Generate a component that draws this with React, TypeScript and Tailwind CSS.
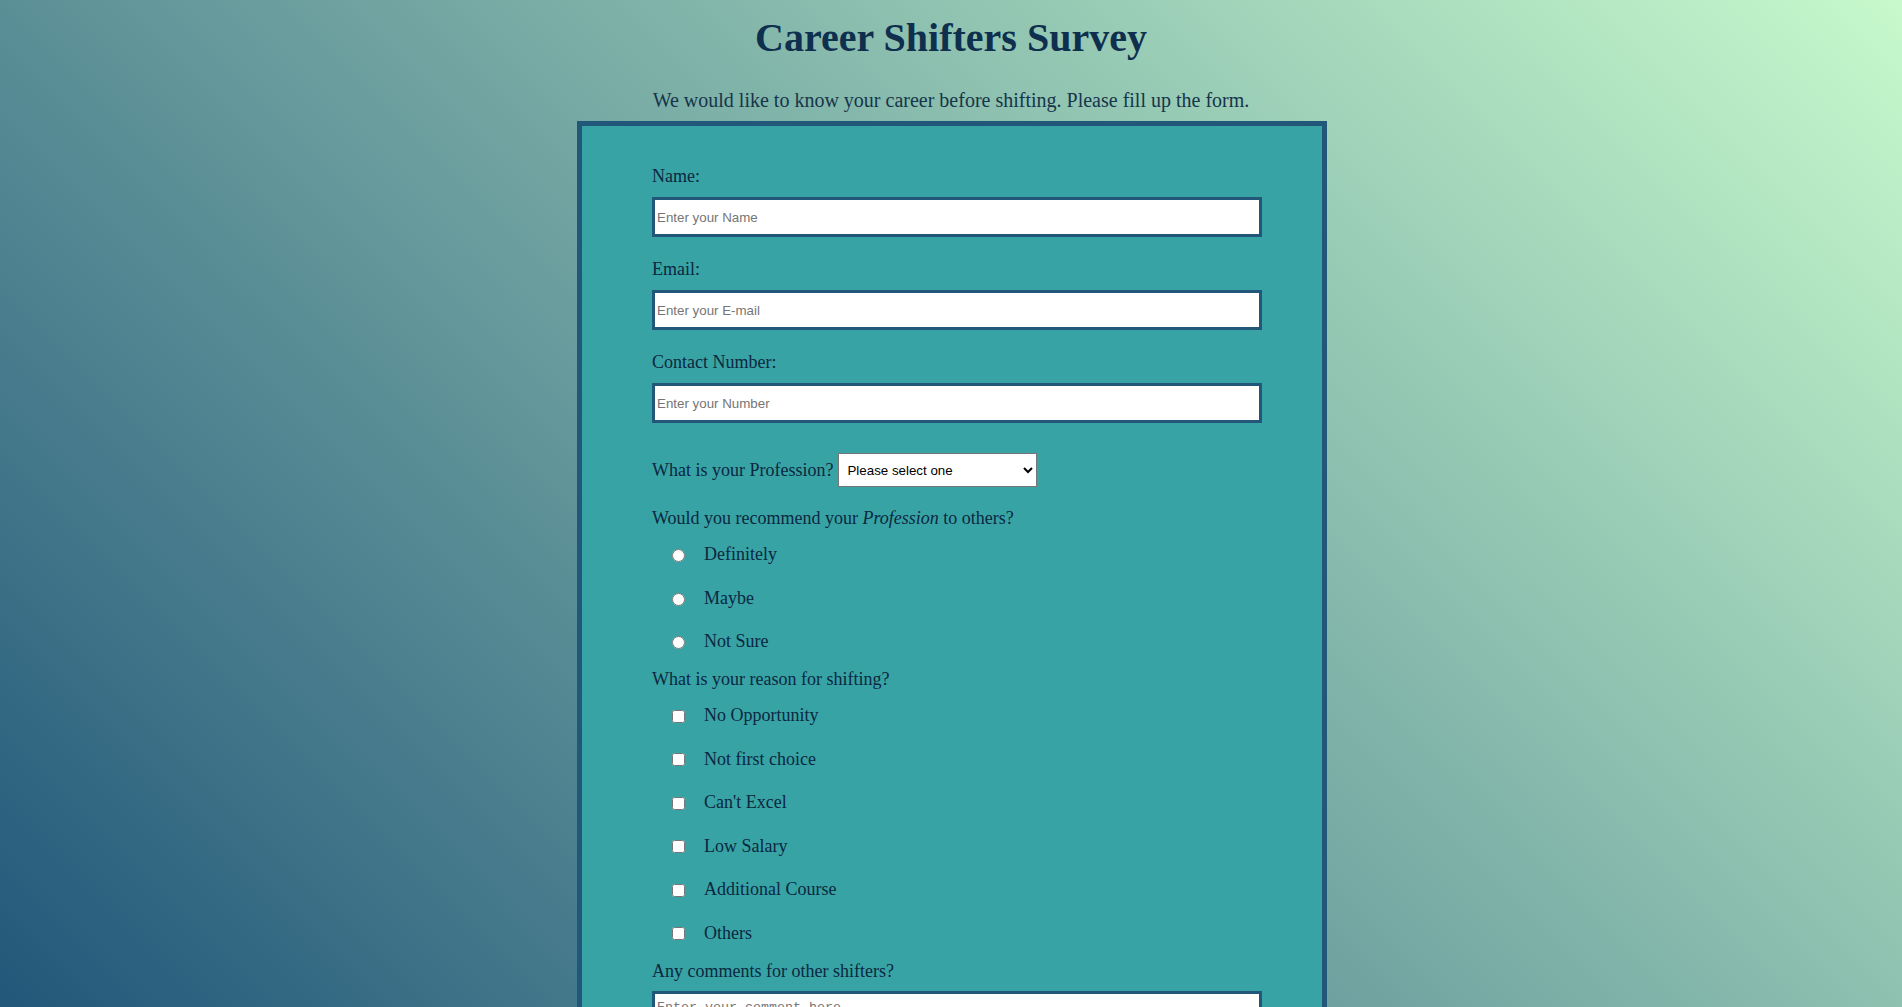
import React from "react";

const radios = ["Definitely", "Maybe", "Not Sure"];
const checks = [
  "No Opportunity",
  "Not first choice",
  "Can't Excel",
  "Low Salary",
  "Additional Course",
  "Others",
];

export default function App() {
  return (
    <div className="min-h-screen bg-[linear-gradient(45deg,#22577a,#c7f9cc)] bg-fixed font-['Liberation_Serif','Times_New_Roman',serif] pt-[15px] pb-[40px]">
      <h1 className="text-center text-[40px] leading-[46px] font-bold text-[#0e2f4d]">
        Career Shifters Survey
      </h1>
      <p className="mt-[27px] text-center text-[20px] leading-[24px] text-[#15354a]">
        We would like to know your career before shifting. Please fill up the form.
      </p>
      <form
        className="ml-[calc(50%-374px)] mt-[9px] w-[750px] border-[5px] border-[#22577a] bg-[#38a3a5] pl-[70px] pr-[60px] pt-[38px] pb-[40px] text-[18px] leading-[24px] text-[#0b2840]"
        onSubmit={(e) => e.preventDefault()}
      >
        <label className="block h-[24px]" htmlFor="name">Name:</label>
        <input
          id="name"
          type="text"
          placeholder="Enter your Name"
          className="mt-[9px] block h-[40px] w-[610px] border-[3px] border-[#22577a] bg-white px-[2px] py-[1px] font-['Liberation_Sans',Arial,sans-serif] text-[13.333px] text-black placeholder:text-[#757575] outline-none"
        />
        <label className="mt-[20px] block h-[24px]" htmlFor="email">Email:</label>
        <input
          id="email"
          type="email"
          placeholder="Enter your E-mail"
          className="mt-[9px] block h-[40px] w-[610px] border-[3px] border-[#22577a] bg-white px-[2px] py-[1px] font-['Liberation_Sans',Arial,sans-serif] text-[13.333px] text-black placeholder:text-[#757575] outline-none"
        />
        <label className="mt-[20px] block h-[24px]" htmlFor="number">Contact Number:</label>
        <input
          id="number"
          type="text"
          placeholder="Enter your Number"
          className="mt-[9px] block h-[40px] w-[610px] border-[3px] border-[#22577a] bg-white px-[2px] py-[1px] font-['Liberation_Sans',Arial,sans-serif] text-[13.333px] text-black placeholder:text-[#757575] outline-none"
        />

        <div className="mt-[30px] flex h-[34px] items-center">
          <label htmlFor="profession">What is your Profession?</label>
          <select
            id="profession"
            defaultValue=""
            className="ml-[5px] h-[34px] w-[199px] border border-[#767676] bg-white pl-[4px] font-['Liberation_Sans',Arial,sans-serif] text-[13.333px] text-black"
          >
            <option value="">Please select one</option>
            <option value="student">Student</option>
            <option value="employee">Employee</option>
            <option value="other">Other</option>
          </select>
        </div>

        <p className="mt-[19px] h-[24px]">
          Would you recommend your <i>Profession</i> to others?
        </p>
        <div className="mt-[4px]">
          {radios.map((r) => (
            <label key={r} className="flex h-[43.5px] items-center pl-[20px]">
              <input type="radio" name="recommend" className="m-0 h-[13px] w-[13px]" />
              <span className="ml-[19px] pb-[3px]">{r}</span>
            </label>
          ))}
        </div>

        <p className="mt-[2.5px] h-[24px]">What is your reason for shifting?</p>
        <div className="mt-[3.5px]">
          {checks.map((c) => (
            <label key={c} className="flex h-[43.5px] items-center pl-[20px]">
              <input type="checkbox" className="m-0 h-[13px] w-[13px]" />
              <span className="ml-[19px] pb-[2px]">{c}</span>
            </label>
          ))}
        </div>

        <label className="mt-[3.5px] block h-[24px]" htmlFor="comment">
          Any comments for other shifters?
        </label>
        <textarea
          id="comment"
          placeholder="Enter your comment here"
          className="mt-[8px] block h-[120px] w-[610px] resize-none border-[3px] border-[#22577a] bg-white px-[2px] py-[2px] font-['Liberation_Mono','Courier_New',monospace] text-[13.333px] text-black placeholder:text-[#757575] outline-none"
        />
        <button
          type="submit"
          className="mt-[20px] block h-[40px] w-[610px] bg-[#22577a] font-['Liberation_Sans',Arial,sans-serif] text-[16px] text-white"
        >
          Submit
        </button>
      </form>
    </div>
  );
}
